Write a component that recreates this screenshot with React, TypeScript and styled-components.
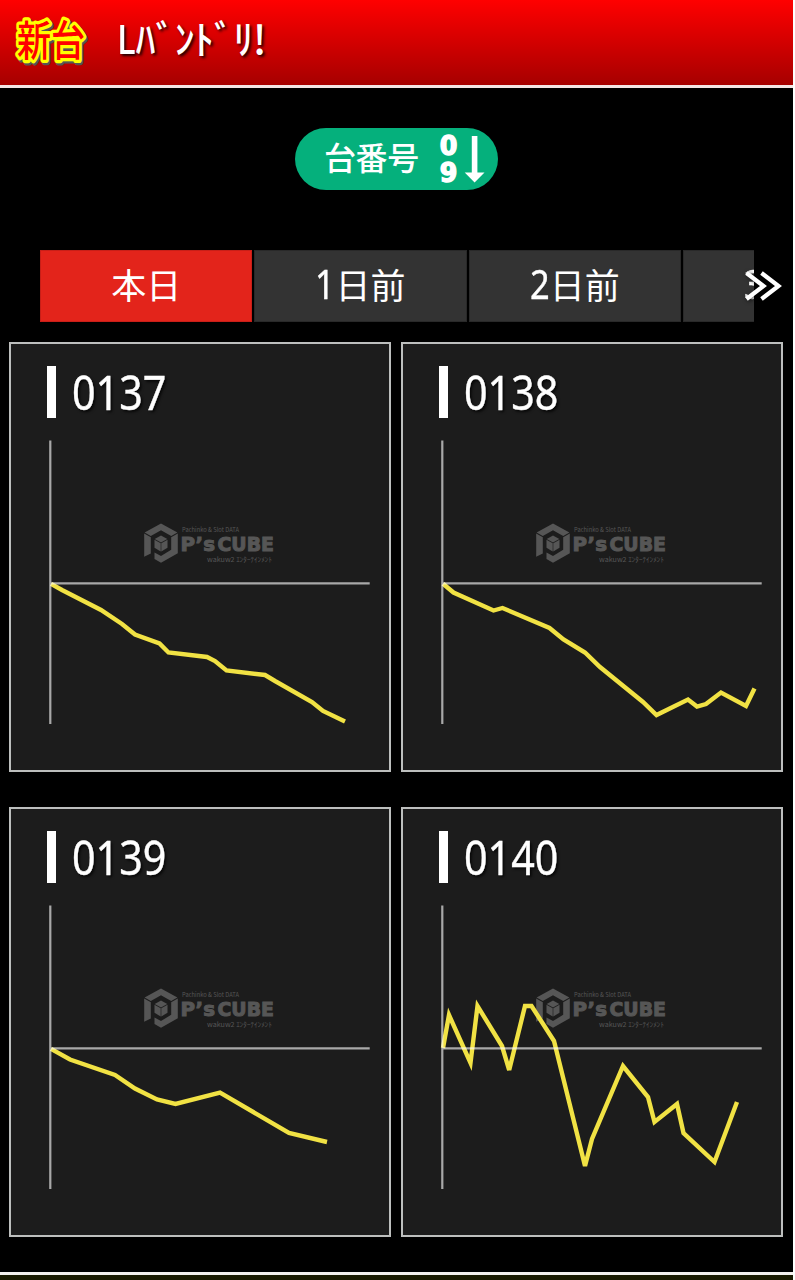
import React from "react";
import styled, { createGlobalStyle } from "styled-components";

const GlobalStyle = createGlobalStyle`
  html, body { margin: 0; background: #fff; }
  body { overflow: hidden; }
  * { box-sizing: border-box; }
`;

const jp = `"Noto Sans CJK JP", "Noto Sans", sans-serif`;

const Page = styled.div`
  width: 793px;
  height: 1280px;
  background: #000;
  color: #fff;
  font-family: ${jp};
  display: flex;
  flex-direction: column;
  overflow: hidden;
`;

const Header = styled.header`
  height: 88px;
  flex: none;
  display: flex;
  align-items: center;
  background: linear-gradient(#ff0000, #a60000);
  border-bottom: 3px solid #f3e6e6;
`;

const NewBadge = styled.svg`
  flex: none;
  width: 92px;
  height: 85px;
  margin-left: 4px;
  overflow: visible;
`;

const Title = styled.h1`
  margin: -12px 0 0 21px;
  font-size: 40px;
  line-height: 60px;
  font-weight: 500;
  white-space: nowrap;
  text-shadow: 2px 2px 3px rgba(0, 0, 0, 0.85);
`;

const Latin = styled.span`
  display: inline-block;
  width: 18.5px;
  transform: scaleX(0.84);
  transform-origin: 0 50%;
`;

const Kana = styled.span`
  letter-spacing: -0.7px;
`;

const SortRow = styled.div`
  flex: none;
  display: flex;
  padding: 40px 0 60px 295px;
`;

const SortButton = styled.button`
  width: 203px;
  height: 62px;
  padding: 0 11px 0 29px;
  border: 0;
  border-radius: 31px;
  background: #05b07c;
  color: #fff;
  font: 500 32px/54px ${jp};
  display: flex;
  align-items: center;
  justify-content: space-between;
  white-space: nowrap;
`;

const SortLabel = styled.span`
  margin-bottom: 7px;
  letter-spacing: -0.4px;
`;

const SortIcon = styled.svg`
  width: 48px;
  height: 54px;
  flex: none;
  overflow: visible;
`;

const TabBar = styled.nav`
  position: relative;
  flex: none;
  width: 714px;
  height: 72px;
  margin: 0 0 20px 40px;
`;

const TabList = styled.div`
  display: flex;
  gap: 2px;
  height: 72px;
  overflow: hidden;
`;

const Tab = styled.div<{ $active?: boolean }>`
  flex: none;
  width: 212.3px;
  height: 72px;
  display: flex;
  justify-content: center;
  background: ${(p) => (p.$active ? "#e3241b" : "#333")};
  border: 1px solid ${(p) => (p.$active ? "#c81f18" : "#292929")};
  font-size: 35px;
  line-height: 66px;
  font-weight: 400;
`;

const Digit = styled.span`
  font-family: "Noto Sans", sans-serif;
  font-size: 40px;
  font-weight: 400;
  -webkit-text-stroke: 0.4px #fff;
  width: 20px;
  display: inline-block;
  transform: scaleX(0.86);
  transform-origin: 0 0;
`;

const NextArrow = styled.svg`
  position: absolute;
  left: 699px;
  top: 15px;
  width: 46px;
  height: 40px;
  filter: drop-shadow(1px 1px 2px rgba(0, 0, 0, 0.7));
`;

const Grid = styled.main`
  flex: none;
  display: grid;
  grid-template-columns: 382px 382px;
  grid-auto-rows: 430px;
  gap: 35px 10px;
  padding-left: 9px;
`;

const Card = styled.section`
  border: 2px solid #bdbfbe;
  background: #1c1c1c;
  display: flex;
  flex-direction: column;
`;

const CardHead = styled.div`
  display: flex;
  align-items: center;
  height: 52px;
  margin: 22px 0 0 36px;
`;

const Marker = styled.span`
  width: 8.5px;
  height: 52px;
  background: #fff;
`;

const Number = styled.h2`
  margin: 0 0 0 16px;
  font: 400 48px/52px "Noto Sans", sans-serif;
  -webkit-text-stroke: 0.4px #fff;
  transform: scaleX(0.86);
  transform-origin: 0 50%;
  text-shadow: 2px 2px 3px rgba(0, 0, 0, 0.8);
`;

const Chart = styled.svg`
  display: block;
  width: 330px;
  height: 294px;
  margin: 20px 0 0 35px;
`;

const Footer = styled.footer`
  flex: none;
  margin-top: 35px;
  height: 20px;
  border-top: 3px solid #f3f0ee;
  background: #191a00;
`;

type Point = [number, number];

const machines: { id: string; points: Point[] }[] = [
  {
    id: "0137",
    points: [[51, 583.8], [62, 590], [101, 610], [122, 624], [135, 634.5], [159.5, 643.5], [168.5, 652.5], [207, 657], [215, 661], [226.5, 670.5], [265, 675], [275, 681], [312, 702], [323, 711], [345, 721.5]],
  },
  {
    id: "0138",
    points: [[51, 583.8], [61.5, 592.5], [101.5, 610.5], [110.5, 608], [157.5, 628], [171.5, 639.5], [193, 652.5], [208, 667], [251, 702], [264.5, 715], [296, 699.5], [305, 706.5], [314, 704], [329, 692.5], [354, 706], [362.5, 688.5]],
  },
  {
    id: "0139",
    points: [[51, 583.8], [70, 594.5], [115, 610], [135, 623.5], [157, 634.5], [175.5, 639], [220, 627.5], [289, 668], [327, 677]],
  },
  {
    id: "0140",
    points: [[51, 583], [57, 550], [78.5, 598], [85.5, 541], [110, 581], [117.2, 605], [133, 541], [139.5, 541], [162, 576], [193, 701], [200, 674], [231, 601], [256, 632], [262.5, 657], [285, 639], [291.5, 668], [322.5, 697], [345, 637]],
  },
];

const Watermark = () => (
  <g fill="#565656">
    <path d="M161 523.5 177.4 532.5 171.2 536 161 530.3 150.8 536 144.6 532.5Z" />
    <path d="M144.2 533.4 150.8 537.2V553.4L144.2 556.8Z" />
    <path d="M177.8 533.4V553.2L161 562.8 154.5 559V552.6L161 556 171.2 549.8V537.2Z" />
    <path d="M161 535.6 167.3 539 161 542.4 154.7 539Z" />
    <path d="M154.5 539.8 160.7 543.2V551.4L154.5 547.8Z" />
    <path d="M167.5 539.8 161.3 543.2V551.4L167.5 547.8Z" />
    <text x="182" y="532" fontFamily="Noto Sans CJK JP, sans-serif" fontSize="6.5" textLength="57" lengthAdjust="spacingAndGlyphs">Pachinko &amp; Slot DATA</text>
    <g fontFamily="DejaVu Sans, sans-serif" fontWeight="700" fontSize="19.5" stroke="#565656" strokeWidth="1">
      <text x="180.5" y="551.2" textLength="34.5" lengthAdjust="spacingAndGlyphs">P’s</text>
      <text x="217.5" y="551.2" textLength="56.5" lengthAdjust="spacingAndGlyphs">CUBE</text>
    </g>
    <text x="207" y="561.5" fontFamily="Noto Sans CJK JP, sans-serif" fontSize="7" textLength="65" lengthAdjust="spacingAndGlyphs">wakuw2 ｴﾝﾀｰﾃｲﾝﾒﾝﾄ</text>
  </g>
);

const MachineCard = ({ id, points }: { id: string; points: Point[] }) => (
  <Card>
    <CardHead>
      <Marker />
      <Number>{id}</Number>
    </CardHead>
    <Chart viewBox="46 438 330 294">
      <Watermark />
      <polyline
        points={points.map((p) => p.join(",")).join(" ")}
        fill="none"
        stroke="#f1e244"
        strokeWidth="4.4"
        strokeMiterlimit="3.75"
      />
      <path d="M50.3 440.5V724M49.2 583.4H369.7" fill="none" stroke="#fff" strokeOpacity=".62" strokeWidth="2.2" />
    </Chart>
  </Card>
);

export default function App() {
  return (
    <>
      <GlobalStyle />
      <Page>
        <Header>
          <NewBadge viewBox="4 0 92 85">
            <g fontFamily="Noto Sans CJK JP, sans-serif" fontWeight="500" fontSize="42" strokeLinejoin="round">
              <text x="18.5" y="57.5" textLength="68" lengthAdjust="spacingAndGlyphs" fill="#555" stroke="#555" strokeWidth="7">新台</text>
              <text x="17" y="56" textLength="68" lengthAdjust="spacingAndGlyphs" fill="#ff0" stroke="#ff0" strokeWidth="6.5">新台</text>
              <text x="17" y="56" textLength="68" lengthAdjust="spacingAndGlyphs" fill="#f00">新台</text>
            </g>
          </NewBadge>
          <Title><Latin>L</Latin><Kana>ﾊﾞﾝﾄﾞﾘ!</Kana></Title>
        </Header>
        <SortRow>
          <SortButton>
            <SortLabel>台番号</SortLabel>
            <SortIcon viewBox="439 132 48 54" fill="#fff">
              <g fontFamily="DejaVu Sans, sans-serif" fontWeight="700" fontSize="26" stroke="#fff" strokeWidth="1.4">
                <text x="439.7" y="155.3" textLength="17.6" lengthAdjust="spacingAndGlyphs">0</text>
                <text x="439.7" y="182" textLength="17.6" lengthAdjust="spacingAndGlyphs">9</text>
              </g>
              <path d="M471.8 136H477.4V172.4H484.5L474.6 182.6 464.7 172.4H471.8Z" />
            </SortIcon>
          </SortButton>
        </SortRow>
        <TabBar>
          <TabList>
            <Tab $active>本日</Tab>
            <Tab><Digit>1</Digit>日前</Tab>
            <Tab><Digit>2</Digit>日前</Tab>
            <Tab><Digit>3</Digit>日前</Tab>
          </TabList>
          <NextArrow viewBox="739 265 46 40">
            <path d="M746.5 273 763.5 286 746.5 299M761.5 273 778.5 286 761.5 299" fill="none" stroke="#fff" strokeWidth="4.2" />
          </NextArrow>
        </TabBar>
        <Grid>
          {machines.map((m) => (
            <MachineCard key={m.id} {...m} />
          ))}
        </Grid>
        <Footer />
      </Page>
    </>
  );
}
